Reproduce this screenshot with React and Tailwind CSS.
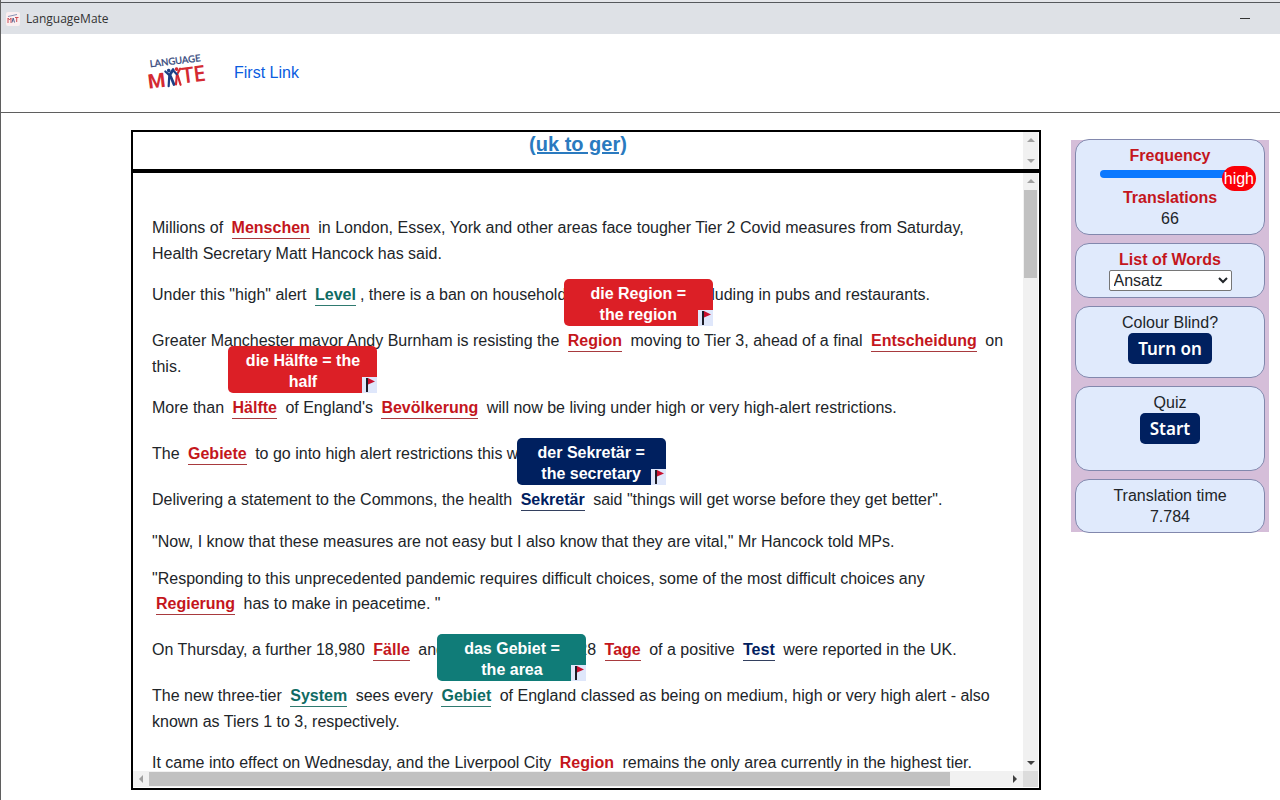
import React from "react";

const tones = {
  red: { word: "text-[#c4161c] border-[#a83a3e]", tip: "bg-[#dc1f26]" },
  teal: { word: "text-[#0f6b63] border-[#2f7a70]", tip: "bg-[#107c78]" },
  navy: { word: "text-[#00205f] border-[#33405f]", tip: "bg-[#00205f]" },
};

function Flag() {
  return (
    <svg viewBox="0 0 15 16" className="block h-4 w-[15px]" aria-hidden="true">
      <rect width="15" height="16" fill="#dfe7fb" />
      <rect x="4" y="1" width="2" height="14" fill="#1c1c28" />
      <path d="M6 1 L13 4.5 L6 7.5 Z" fill="#c8102e" />
    </svg>
  );
}

function Word({ children, tone = "red", tip }) {
  return (
    <span className={`relative mx-1 my-1 inline-block border-b font-bold leading-[21px] ${tones[tone].word}`}>
      {children}
      {tip && (
        <span
          role="tooltip"
          className={`absolute bottom-full -left-1 z-10 mb-1 w-[149px] rounded-[5px] px-4 pt-1 pb-px text-center text-white ${tones[tone].tip}`}
        >
          {tip}
          <button type="button" aria-label="Report translation" className="absolute right-0 bottom-0">
            <Flag />
          </button>
        </span>
      )}
    </span>
  );
}

function Arrow({ dir, dark }) {
  const d = {
    up: "M4 10 L8 6 L12 10 Z",
    down: "M4 6 L8 10 L12 6 Z",
    left: "M10 4 L6 8 L10 12 Z",
    right: "M6 4 L10 8 L6 12 Z",
  }[dir];
  return (
    <svg viewBox="0 0 16 16" className="block size-4 shrink-0" aria-hidden="true">
      <path d={d} fill={dark ? "#404040" : "#a0a0a0"} />
    </svg>
  );
}

function Card({ className = "", children }) {
  return (
    <section
      className={`flex flex-col items-center rounded-[14px] border border-[#8288ad] bg-[#e0eafc] pt-[5px] ${className}`}
    >
      {children}
    </section>
  );
}

function Logo() {
  return (
    <svg viewBox="0 0 60 44" className="h-11 w-15 overflow-visible" role="img" aria-label="Language Mate">
      <g transform="rotate(-7 30 22)" fontFamily="'Open Sans',sans-serif" fontWeight="600">
        <text x="3" y="14" fontSize="9.5" fontWeight="400" fontFamily="'Lato',sans-serif" fill="#34487c" stroke="#34487c" strokeWidth="0.3">
          LANGUAGE
        </text>
        <g fill="#d42a32">
          <text x="-1" y="35" fontSize="20" fontFamily="'Roboto',sans-serif" fontWeight="700">M</text>
          <text x="33" y="34" fontSize="22">T</text>
          <text x="45" y="34" fontSize="22">E</text>
        </g>
        <g fill="none" strokeWidth="2.2" strokeLinecap="round">
          <path d="M17.500 20 L21 24 L19 35" stroke="#1c3f86" />
          <path d="M22 25 L24.500 34 M21.500 24 L25.500 19" stroke="#1c3f86" strokeWidth="2.800" />
          <path d="M32.500 19 L29 24 L31 35" stroke="#d42a32" />
          <path d="M28.500 25 L26.500 34" stroke="#d42a32" />
          <path d="M28.500 24 L25.500 20" stroke="#1c3f86" />
        </g>
        <circle cx="21" cy="19.5" r="1.8" fill="#1c3f86" />
        <circle cx="29" cy="19" r="1.8" fill="#d42a32" />
      </g>
    </svg>
  );
}

export default function App() {
  return (
    <div className="flex h-screen min-h-[800px] flex-col border-l border-[#5f5f5f] bg-white font-['Liberation_Sans',Arial,sans-serif] text-base leading-[21px] text-[#212529]">
      <div className="h-[2px] shrink-0 bg-[#e4e6ea]" />
      <div className="flex h-8 shrink-0 items-center gap-[6px] border-t border-[#55585c] bg-[#dee1e6] pl-[5px] font-['Open_Sans',sans-serif] text-[12px] text-[#333]">
        <svg viewBox="0 0 14 14" className="size-[14px]" aria-hidden="true">
          <rect width="14" height="14" rx="2" fill="#fbeff0" />
          <path d="M2 4.5 L11 2.5" stroke="#8a93b5" strokeWidth="1" />
          <path d="M2 11 V6 L3.500 8 L5 6 V11 M9 5.500 H12.500 M10.700 5.500 V10" fill="none" stroke="#cf5058" strokeWidth="1" />
          <path d="M6 10.500 L7.200 6 L8.500 10.500" fill="none" stroke="#56618f" strokeWidth="1" />
        </svg>
        <span>LanguageMate</span>
        <button type="button" aria-label="Minimise" className="mr-[30px] ml-auto flex h-full items-center">
          <svg viewBox="0 0 10 10" className="size-[10px]" aria-hidden="true">
            <path d="M0 4.500 H10" stroke="#333" />
          </svg>
        </button>
      </div>

      <header className="flex h-[79px] shrink-0 items-center gap-[26px] border-b border-[#5f5f5f] pb-[2px] pl-[147px]">
        <Logo />
        <nav>
          <a href="#first" className="text-[#0a5ce0]">First Link</a>
        </nav>
      </header>

      <div className="flex min-h-0 flex-1 items-start pt-[17px] pr-[11px] pb-[10px] pl-[130px]">
        <main className="mr-[30px] flex h-full min-w-0 flex-1 flex-col border-2 border-black">
          <div className="flex h-[41px] shrink-0 border-b-4 border-black">
            <h1 className="flex-1 text-center text-[20px] leading-6 font-bold">
              <a href="#translation" className="text-[#2a7abf] underline">(uk to ger)</a>
            </h1>
            <div className="mr-px flex w-[15px] flex-col items-center justify-between bg-[#f1f1f1]" aria-hidden="true">
              <Arrow dir="up" />
              <Arrow dir="down" />
            </div>
          </div>

          <div className="flex min-h-0 flex-1">
            <article className="min-w-0 flex-1 space-y-4 overflow-hidden pt-10 pr-4 pl-[19px]">
              <p>
                Millions of <Word>Menschen</Word> in London, Essex, York and other areas face tougher Tier 2 Covid
                measures from Saturday, Health Secretary Matt Hancock has said.
              </p>
              <p>
                Under this "high" alert <Word tone="teal">Level</Word>, there is a ban on households mixing indoors,
                including in pubs and restaurants.
              </p>
              <p>
                Greater Manchester mayor Andy Burnham is resisting the{" "}
                <Word tip="die Region = the region">Region</Word> moving to Tier 3, ahead of a final{" "}
                <Word>Entscheidung</Word> on this.
              </p>
              <p>
                More than <Word tip="die Hälfte = the half">Hälfte</Word> of England's <Word>Bevölkerung</Word> will
                now be living under high or very high-alert restrictions.
              </p>
              <p>
                The <Word>Gebiete</Word> to go into high alert restrictions this weekend are:
              </p>
              <p>
                Delivering a statement to the Commons, the health{" "}
                <Word tone="navy" tip="der Sekretär = the secretary">Sekretär</Word> said "things will get worse before
                they get better".
              </p>
              <p>"Now, I know that these measures are not easy but I also know that they are vital," Mr Hancock told MPs.</p>
              <p>
                "Responding to this unprecedented pandemic requires difficult choices, some of the most difficult
                choices any <Word>Regierung</Word> has to make in peacetime. "
              </p>
              <p>
                On Thursday, a further 18,980 <Word>Fälle</Word> and 138 deaths within 28 <Word>Tage</Word> of a
                positive <Word tone="navy">Test</Word> were reported in the UK.
              </p>
              <p>
                The new three-tier <Word tone="teal">System</Word> sees every{" "}
                <Word tone="teal" tip="das Gebiet = the area">Gebiet</Word> of England classed as being on medium, high
                or very high alert - also known as Tiers 1 to 3, respectively.
              </p>
              <p>
                It came into effect on Wednesday, and the Liverpool City <Word>Region</Word> remains the only area
                currently in the highest tier.
              </p>
            </article>
            <div className="mr-px flex w-[15px] flex-col items-center bg-[#f1f1f1]" aria-hidden="true">
              <Arrow dir="up" />
              <div className="mt-px h-[88px] w-[13px] bg-[#c1c1c1]" />
              <div className="mt-auto">
                <Arrow dir="down" dark />
              </div>
            </div>
          </div>

          <div className="mr-px mb-px flex h-4 shrink-0" aria-hidden="true">
            <div className="flex flex-1 items-center bg-[#f1f1f1]">
              <Arrow dir="left" />
              <div className="h-[14px] w-9/10 bg-[#c1c1c1]" />
              <div className="ml-auto">
                <Arrow dir="right" dark />
              </div>
            </div>
            <div className="w-[15px] bg-[#dcdcdc]" />
          </div>
        </main>

        <aside className="mt-[10px] w-[198px] shrink-0 bg-[#d5bed9] px-1 text-center">
          <div className="-my-px flex flex-col gap-2">
            <Card className="h-24">
              <label htmlFor="frequency" className="font-bold text-[#c4161c]">Frequency</label>
              <div className="relative flex h-[21px] w-[140px] items-start pt-1">
                <input
                  id="frequency"
                  type="range"
                  min="0"
                  max="10"
                  defaultValue="10"
                  className="h-2 w-full appearance-none rounded-full bg-[#0a78ff] [&::-webkit-slider-thumb]:opacity-0"
                />
                <output
                  htmlFor="frequency"
                  className="pointer-events-none absolute top-0 -right-4 rounded-full bg-[#fb0007] px-[2px] py-[2px] text-white"
                >
                  high
                </output>
              </div>
              <h2 className="font-bold text-[#c4161c]">Translations</h2>
              <p>66</p>
            </Card>
            <Card className="h-[55px]">
              <label htmlFor="words" className="font-bold text-[#c4161c]">List of Words</label>
              <select id="words" className="h-[21px] w-[123px] rounded-[2px] border border-[#767676] bg-white text-[#212529]">
                <option>Ansatz</option>
              </select>
            </Card>
            <Card className="h-[72px]">
              <p>Colour Blind?</p>
              <button type="button" className="h-[31px] rounded-[5px] bg-[#00205f] px-[10px] font-['Noto_Sans',sans-serif] text-[17px] font-semibold text-white">
                Turn on
              </button>
            </Card>
            <Card className="h-[85px]">
              <p>Quiz</p>
              <button type="button" className="h-[31px] rounded-[5px] bg-[#00205f] px-[10px] font-['Noto_Sans',sans-serif] text-[17px] font-semibold text-white">
                Start
              </button>
            </Card>
            <Card className="h-[54px]">
              <p>Translation time</p>
              <p>7.784</p>
            </Card>
          </div>
        </aside>
      </div>
    </div>
  );
}
